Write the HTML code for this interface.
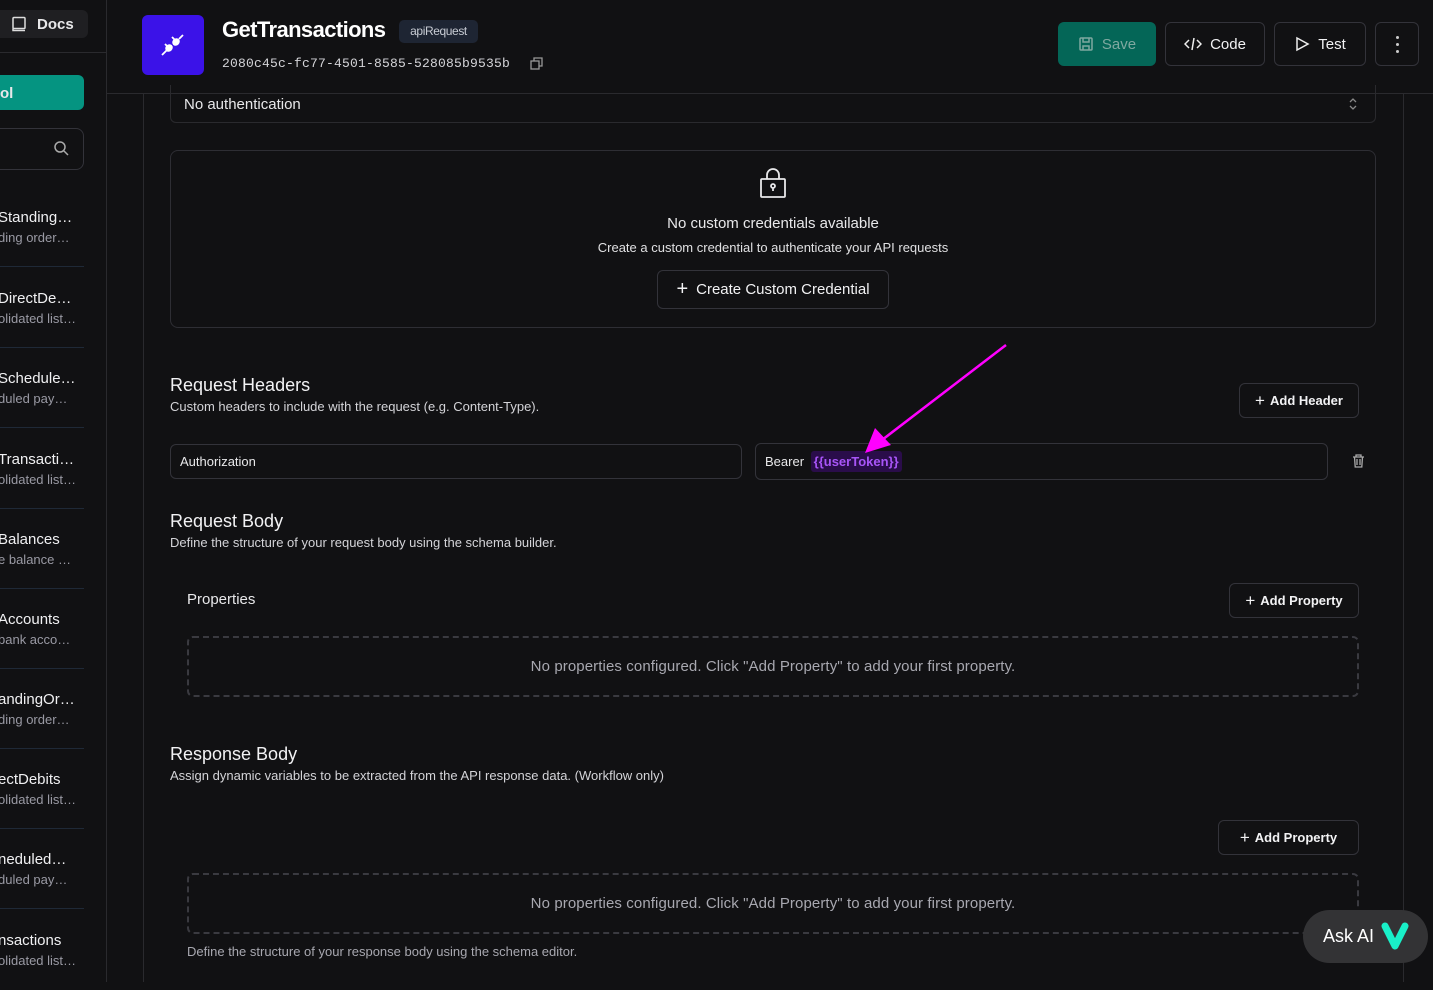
<!DOCTYPE html>
<html><head><meta charset="utf-8"><style>
*{box-sizing:border-box;margin:0;padding:0}
body{width:1433px;height:982px;overflow:hidden;background:#111113;font-family:"Liberation Sans",sans-serif;color:#e8e8ea;position:relative}
.abs{position:absolute}
.sb{left:0;top:0;width:107px;height:982px;border-right:1px solid #2a2a2e}
.item{position:absolute;left:0;width:84px;border-bottom:1px solid #1f2937;height:81px}
.item .t{position:absolute;left:-2px;top:23px;font-size:15px;color:#f0f0f2;white-space:nowrap}
.item .s{position:absolute;left:-2px;top:44px;font-size:13px;color:#9a9aa4;white-space:nowrap}
.btn{position:absolute;border:1px solid #33333a;border-radius:6px;background:#111113;display:flex;align-items:center;justify-content:center;gap:8px;color:#f2f2f4}
.h2{font-size:18px;color:#f2f2f4}
.sub{font-size:13px;color:#d4d4d8}
.inp{position:absolute;border:1px solid #33333a;border-radius:6px;font-size:13px;padding-left:9px;display:flex;align-items:center}
.dash{position:absolute;border:2px dashed #3a3a40;border-radius:6px;display:flex;align-items:center;justify-content:center;font-size:15px;color:#a8a8b0;letter-spacing:0.1px}
</style></head><body>
<div class="abs sb"></div>
<div class="abs" style="left:0;top:10px;width:88px;height:28px;background:#1f1f22;border-radius:0 6px 6px 0"></div>
<svg class="abs" style="left:11px;top:16px" width="16" height="16" viewBox="0 0 16 16" fill="none" stroke="#ddd" stroke-width="1.5"><rect x="2" y="1.5" width="12" height="11" rx="1"/><path d="M2 12.5v2h12"/></svg>
<div class="abs" style="left:37px;top:16px;font-size:15px;font-weight:bold">Docs</div>
<div class="abs" style="left:0;top:52px;width:107px;border-top:1px solid #2a2a2e"></div>
<div class="abs" style="left:0;top:75px;width:84px;height:35px;background:#059481;border-radius:0 6px 6px 0;font-weight:bold;font-size:15px;padding:10px 0 0 0">ol</div>
<div class="abs" style="left:-10px;top:128px;width:94px;height:42px;border:1px solid #33333a;border-radius:8px"></div>
<svg class="abs" style="left:53px;top:140px" width="17" height="17" viewBox="0 0 17 17" fill="none" stroke="#aaa" stroke-width="1.5"><circle cx="7" cy="7" r="5"/><path d="M11 11l4 4"/></svg>
<div class="item" style="top:186px"><div class="t">Standing…</div><div class="s">ding order…</div></div>
<div class="item" style="top:267px"><div class="t">DirectDe…</div><div class="s">olidated list…</div></div>
<div class="item" style="top:347px"><div class="t">Schedule…</div><div class="s">duled pay…</div></div>
<div class="item" style="top:428px"><div class="t">Transacti…</div><div class="s">olidated list…</div></div>
<div class="item" style="top:508px"><div class="t">Balances</div><div class="s">e balance …</div></div>
<div class="item" style="top:588px"><div class="t">Accounts</div><div class="s">bank acco…</div></div>
<div class="item" style="top:668px"><div class="t">andingOr…</div><div class="s">ding order…</div></div>
<div class="item" style="top:748px"><div class="t">ectDebits</div><div class="s">olidated list…</div></div>
<div class="item" style="top:828px"><div class="t">neduled…</div><div class="s">duled pay…</div></div>
<div class="item" style="top:909px;border:none"><div class="t">nsactions</div><div class="s">olidated list…</div></div>

<div class="abs" style="left:107px;top:93px;width:1326px;border-top:1px solid #2a2a2e"></div>
<div class="abs" style="left:143px;top:94px;height:888px;border-left:1px solid #2a2a2e"></div>
<div class="abs" style="left:1403px;top:94px;height:888px;border-left:1px solid #2a2a2e"></div>
<div class="abs" style="left:142px;top:15px;width:62px;height:60px;background:#3b12e8;border-radius:6px"></div>
<svg class="abs" style="left:159px;top:31px" width="28" height="28" viewBox="0 0 28 28" fill="#fff"><ellipse cx="10" cy="17" rx="4" ry="3.5" transform="rotate(-45 10 17)"/><ellipse cx="17" cy="11" rx="4" ry="3.5" transform="rotate(-45 17 11)"/><path d="M3 24l5-5M20 8l4-4M6 13l3 3M13 6l3 3" stroke="#fff" stroke-width="1.8"/></svg>
<div class="abs" style="left:222px;top:17px;font-size:22px;font-weight:bold;color:#fff;letter-spacing:-0.6px">GetTransactions</div>
<div class="abs" style="left:399px;top:20px;width:79px;height:23px;background:#1e2533;border-radius:5px;font-size:12px;color:#c8ccd4;text-align:center;line-height:22px;letter-spacing:-0.4px">apiRequest</div>
<div class="abs" style="left:222px;top:56px;font-family:'Liberation Mono',monospace;font-size:13px;color:#d4d4d8;letter-spacing:0.2px">2080c45c-fc77-4501-8585-528085b9535b</div>
<svg class="abs" style="left:529px;top:56px" width="15" height="15" viewBox="0 0 15 15" fill="none" stroke="#999" stroke-width="1.3"><rect x="2" y="5" width="8" height="8"/><path d="M5 5V2h8v8h-3"/></svg>
<div class="btn" style="left:1058px;top:22px;width:98px;height:44px;background:#046657;border:none;color:#7fa8a0;font-size:15px"><svg width="16" height="16" viewBox="0 0 16 16" fill="none" stroke="#7fa8a0" stroke-width="1.5"><rect x="2" y="2" width="12" height="12" rx="1"/><path d="M5 2v4h6V2M5 14v-4h6v4"/></svg>Save</div>
<div class="btn" style="left:1165px;top:22px;width:100px;height:44px;font-size:15px"><svg width="18" height="14" viewBox="0 0 18 14" fill="none" stroke="#eee" stroke-width="1.5"><path d="M5 3L1 7l4 4M13 3l4 4-4 4M10 1L8 13"/></svg>Code</div>
<div class="btn" style="left:1274px;top:22px;width:92px;height:44px;font-size:15px"><svg width="16" height="16" viewBox="0 0 16 16" fill="none" stroke="#eee" stroke-width="1.5"><path d="M3 2l11 6-11 6z"/></svg>Test</div>
<div class="btn" style="left:1375px;top:22px;width:44px;height:44px;flex-direction:column;gap:4px"><i style="width:3px;height:3px;background:#ccc;border-radius:50%"></i><i style="width:3px;height:3px;background:#ccc;border-radius:50%"></i><i style="width:3px;height:3px;background:#ccc;border-radius:50%"></i></div>

<div class="abs" style="left:170px;top:85px;width:1206px;height:38px;border:1px solid #2a2a2e;border-top:none;border-radius:0 0 6px 6px"></div>
<div class="abs" style="left:184px;top:96px;font-size:15px">No authentication</div>
<svg class="abs" style="left:1348px;top:97px" width="10" height="14" viewBox="0 0 10 14" fill="none" stroke="#888" stroke-width="1.3"><path d="M2 5l3-3 3 3M2 9l3 3 3-3"/></svg>

<div class="abs" style="left:170px;top:150px;width:1206px;height:178px;border:1px solid #2e2e34;border-radius:8px"></div>
<svg class="abs" style="left:759px;top:168px" width="28" height="32" viewBox="0 0 28 32" fill="none" stroke="#e8e8ea" stroke-width="1.8"><rect x="2" y="11" width="24" height="18" rx="1"/><path d="M8 11V7a6 6 0 0112 0v4"/><circle cx="14" cy="18" r="2"/><path d="M14 20v3"/></svg>
<div class="abs" style="left:170px;top:215px;width:1206px;text-align:center;font-size:15px">No custom credentials available</div>
<div class="abs" style="left:170px;top:240px;width:1206px;text-align:center;font-size:13px;color:#e0e0e2">Create a custom credential to authenticate your API requests</div>
<div class="btn" style="left:657px;top:270px;width:232px;height:39px;font-size:15px"><span style="font-size:20px;font-weight:300">+</span>Create Custom Credential</div>

<div class="abs h2" style="left:170px;top:375px">Request Headers</div>
<div class="abs sub" style="left:170px;top:399px">Custom headers to include with the request (e.g. Content-Type).</div>
<div class="btn" style="left:1239px;top:383px;width:120px;height:35px;font-size:13px;font-weight:bold;gap:5px"><span style="font-size:17px;font-weight:300">+</span>Add Header</div>
<div class="inp" style="left:170px;top:444px;width:572px;height:35px">Authorization</div>
<div class="inp" style="left:755px;top:443px;width:573px;height:37px">Bearer&nbsp;<span style="background:#2a0d4a;color:#a855f7;padding:3px 3px;border-radius:3px;margin-left:3px;font-weight:bold">{{userToken}}</span></div>
<svg class="abs" style="left:1352px;top:454px" width="13" height="14" viewBox="0 0 13 14" fill="none" stroke="#aaa" stroke-width="1.3"><path d="M1 3h11M4 3V1h5v2M2.5 3l.7 10h6.6l.7-10M5 5v6M8 5v6"/></svg>
<svg class="abs" style="left:860px;top:340px" width="150" height="115" viewBox="0 0 150 115"><path d="M146 5L22 100" stroke="#ff00ff" stroke-width="2.5"/><path d="M5 113l10-25 16 17z" fill="#ff00ff"/></svg>

<div class="abs h2" style="left:170px;top:511px">Request Body</div>
<div class="abs sub" style="left:170px;top:535px">Define the structure of your request body using the schema builder.</div>
<div class="abs" style="left:187px;top:591px;font-size:15px">Properties</div>
<div class="btn" style="left:1229px;top:583px;width:130px;height:35px;font-size:13px;font-weight:bold;gap:5px"><span style="font-size:17px;font-weight:300">+</span>Add Property</div>
<div class="dash" style="left:187px;top:636px;width:1172px;height:61px">No properties configured. Click "Add Property" to add your first property.</div>

<div class="abs h2" style="left:170px;top:744px">Response Body</div>
<div class="abs sub" style="left:170px;top:768px">Assign dynamic variables to be extracted from the API response data. (Workflow only)</div>
<div class="btn" style="left:1218px;top:820px;width:141px;height:35px;font-size:13px;font-weight:bold;gap:5px"><span style="font-size:17px;font-weight:300">+</span>Add Property</div>
<div class="dash" style="left:187px;top:873px;width:1172px;height:61px">No properties configured. Click "Add Property" to add your first property.</div>
<div class="abs" style="left:187px;top:944px;font-size:13px;color:#a8a8b0">Define the structure of your response body using the schema editor.</div>

<div class="abs" style="left:1303px;top:910px;width:125px;height:53px;background:#333335;border-radius:27px"></div>
<div class="abs" style="left:1323px;top:926px;font-size:18px;color:#fff">Ask AI</div>
<svg class="abs" style="left:1381px;top:921px" width="28" height="30" viewBox="0 0 28 30"><path d="M4 5l10 20L24 5" stroke="#19f0c8" stroke-width="7" stroke-linecap="round" stroke-linejoin="round" fill="none"/></svg>
</body></html>
